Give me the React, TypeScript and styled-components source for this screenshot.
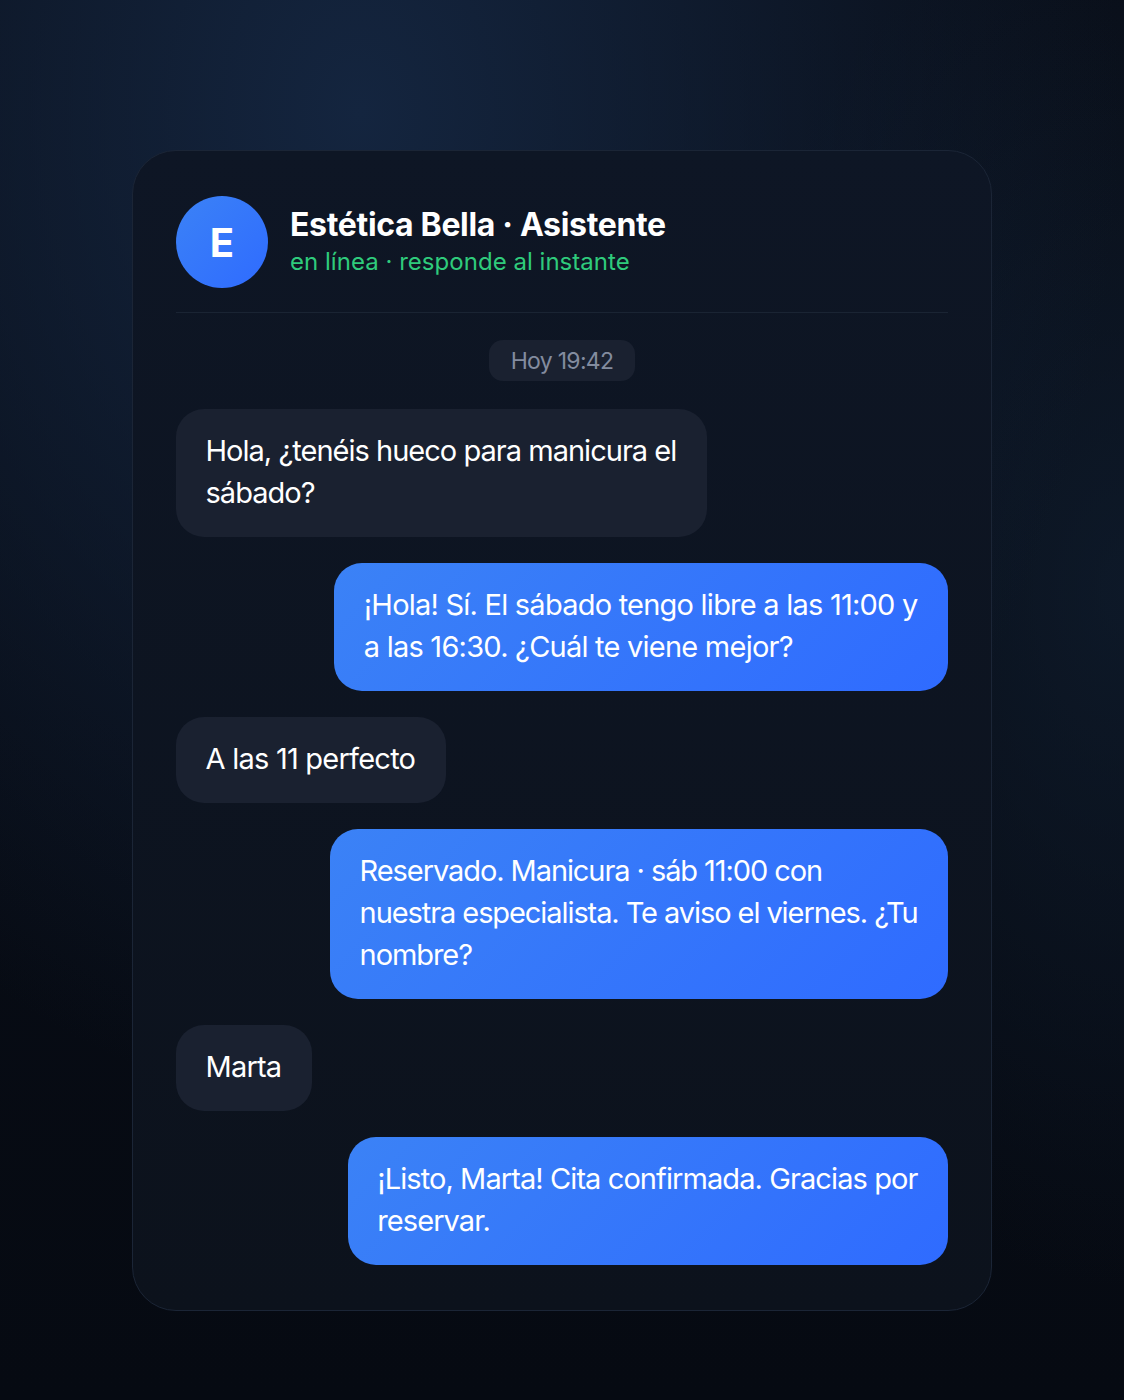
import React from 'react';
import styled, { createGlobalStyle } from 'styled-components';

const GlobalStyle = createGlobalStyle`
  html, body {
    margin: 0;
    padding: 0;
    background: #05080f;
  }
  body {
    font-family: Inter, "Noto Sans", sans-serif;
    -webkit-font-smoothing: antialiased;
  }
`;

const Page = styled.div`
  box-sizing: border-box;
  width: 1124px;
  height: 1400px;
  padding: 150px 132px 89px;
  background:
    radial-gradient(760px 1000px at 32% 8%, #14253f 0%, rgba(20, 37, 63, 0) 100%),
    radial-gradient(420px 700px at 100% 42%, rgba(16, 30, 48, 0.7) 0%, rgba(16, 30, 48, 0) 100%),
    linear-gradient(180deg, #090e18 0%, #060a12 100%);
`;

const Card = styled.div`
  box-sizing: border-box;
  width: 860px;
  height: 1161px;
  padding: 45px 43px;
  background: linear-gradient(180deg, #0e1625 0%, #0c121c 100%);
  border: 1px solid #1b2536;
  border-radius: 44px;
  display: flex;
  flex-direction: column;
`;

const Header = styled.header`
  display: flex;
  align-items: center;
  gap: 22px;
  padding-bottom: 24px;
  border-bottom: 1px solid #1a2433;
`;

const Avatar = styled.div`
  width: 92px;
  height: 92px;
  border-radius: 50%;
  background: linear-gradient(135deg, #3b82f6, #2f6bff);
  color: #fff;
  font-size: 40px;
  font-weight: 700;
  display: flex;
  align-items: center;
  justify-content: center;
`;

const Titles = styled.div`
  display: flex;
  flex-direction: column;
  gap: 2px;
`;

const Title = styled.div`
  color: #fff;
  font-size: 32px;
  line-height: 36px;
  margin-bottom: 2px;
  font-weight: 700;
  letter-spacing: -0.33px;
`;

const Status = styled.div`
  color: #2fcb7c;
  font-size: 24px;
  line-height: 30px;
  letter-spacing: 0.03px;
`;

const Thread = styled.div`
  display: flex;
  flex-direction: column;
  gap: 26px;
  padding-top: 27px;
`;

const Stamp = styled.div`
  align-self: center;
  margin-bottom: 2px;
  padding: 1px 22px 0;
  height: 40px;
  line-height: 40px;
  border-radius: 14px;
  background: #1a2130;
  color: #838c9f;
  font-size: 23px;
  letter-spacing: -0.7px;
`;

const Bubble = styled.div<{ $mine?: boolean; $track: number }>`
  align-self: ${(p) => (p.$mine ? 'flex-end' : 'flex-start')};
  padding: 21px 30.5px 23px 29.5px;
  border-radius: 28px;
  color: #fff;
  font-size: 29px;
  line-height: 42px;
  letter-spacing: ${(p) => p.$track}px;
  white-space: nowrap;
  background: ${(p) => (p.$mine ? 'linear-gradient(135deg, #3b82f6, #2f6bff)' : '#1a2130')};
`;

export default function App() {
  return (
    <>
      <GlobalStyle />
      <Page>
        <Card>
          <Header>
            <Avatar>E</Avatar>
            <Titles>
              <Title>Estética Bella · Asistente</Title>
              <Status>en línea · responde al instante</Status>
            </Titles>
          </Header>
          <Thread>
            <Stamp>Hoy 19:42</Stamp>
            <Bubble $track={-0.98}>Hola, ¿tenéis hueco para manicura el<br />sábado?</Bubble>
            <Bubble $mine $track={-0.77}>¡Hola! Sí. El sábado tengo libre a las 11:00 y<br />a las 16:30. ¿Cuál te viene mejor?</Bubble>
            <Bubble $track={-0.76}>A las 11 perfecto</Bubble>
            <Bubble $mine $track={-1.08}>Reservado. Manicura · sáb 11:00 con<br />nuestra especialista. Te aviso el viernes. ¿Tu<br />nombre?</Bubble>
            <Bubble $track={-0.8}>Marta</Bubble>
            <Bubble $mine $track={-0.91}>¡Listo, Marta! Cita confirmada. Gracias por<br />reservar.</Bubble>
          </Thread>
        </Card>
      </Page>
    </>
  );
}
